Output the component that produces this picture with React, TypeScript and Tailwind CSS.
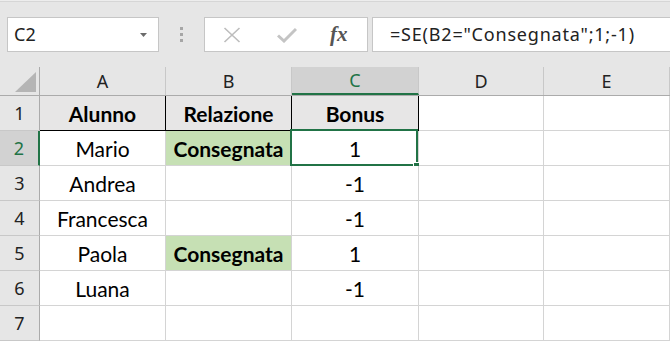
import { Fragment } from 'react';

// Column widths include the 1px right gridline
const columns = [
  { key: 'A', width: 'w-[126px]' },
  { key: 'B', width: 'w-[126px]' },
  { key: 'C', width: 'w-[127px]' },
  { key: 'D', width: 'w-[125px]' },
  { key: 'E', width: 'w-[126px]' },
];

type Row = { n: number; a?: string; b?: string; c?: string };

const rows: Row[] = [
  { n: 1, a: 'Alunno', b: 'Relazione', c: 'Bonus' },
  { n: 2, a: 'Mario', b: 'Consegnata', c: '1' },
  { n: 3, a: 'Andrea', c: '-1' },
  { n: 4, a: 'Francesca', c: '-1' },
  { n: 5, a: 'Paola', b: 'Consegnata', c: '1' },
  { n: 6, a: 'Luana', c: '-1' },
  { n: 7 },
];

const uiFont = "font-['Noto_Sans',sans-serif]";
const cellFont = "font-['Lato',sans-serif]";

const FormulaBar = () => (
  <div className="h-[67px] bg-[#e6e6e6] flex flex-col">
    <div className="h-px bg-[#ededed]" />
    <div className="h-px bg-[#d6d6d6]" />
    <div className="flex items-start pt-[15px]">
      {/* Name box */}
      <div className={`ml-[7px] w-[152px] h-[35px] bg-white border border-[#c6c6c6] flex items-center justify-between pl-[6px] pr-[11px] ${uiFont} text-[18px] text-[#222]`}>
        <span>C2</span>
        <svg width="7" height="4" viewBox="0 0 7 4">
          <path d="M0 0 L7 0 L3.5 4 Z" fill="#6b6b6b" />
        </svg>
      </div>
      {/* Vertical ellipsis */}
      <div className="w-[45px] h-[35px] flex flex-col items-center justify-center gap-[3px]">
        <div className="w-[3px] h-[3px] bg-[#a6a6a6]" />
        <div className="w-[3px] h-[3px] bg-[#a6a6a6]" />
        <div className="w-[3px] h-[3px] bg-[#a6a6a6]" />
      </div>
      {/* Cancel / Enter / Insert function */}
      <div className="w-[164px] h-[35px] bg-white border border-[#c6c6c6] flex items-center">
        <svg className="ml-[18px]" width="18" height="16" viewBox="0 0 18 16">
          <path d="M1.5 1 L16.5 15 M16.5 1 L1.5 15" stroke="#bdbdbd" strokeWidth="1.6" fill="none" />
        </svg>
        <svg className="ml-[36px]" width="20" height="16" viewBox="0 0 20 16">
          <path d="M1 8.5 L7 14 L19 2" stroke="#c4c4c4" strokeWidth="3" fill="none" />
        </svg>
        <span className="ml-[33px] font-['Liberation_Serif',serif] italic font-bold text-[21px] text-[#555] leading-none">
          fx
        </span>
      </div>
      {/* Formula input */}
      <div className={`ml-[4px] flex-1 -mr-[4px] h-[35px] bg-white border border-[#c6c6c6] flex items-center pl-[17px] ${uiFont} text-[18px] tracking-[0.8px] text-[#222]`}>
        =SE(B2="Consegnata";1;-1)
      </div>
    </div>
  </div>
);

const HeaderRow = () => (
  <div className={`flex h-[29px] bg-[#e6e6e6] border-b border-[#ababab] ${uiFont} text-[18px] text-[#222]`}>
    <div className="w-[40px] h-full border-r border-[#ababab] relative">
      <svg className="absolute left-[15px] top-[5px]" width="21" height="20" viewBox="0 0 21 20">
        <path d="M21 0 L21 20 L0 20 Z" fill="#b5b5b5" />
      </svg>
    </div>
    {columns.map((col) => {
      const selected = col.key === 'C';
      return (
        <div
          key={col.key}
          className={`${col.width} h-full border-r border-[#c8c8c8] flex items-center justify-center ${
            selected ? 'bg-[#d2d2d2] text-[#217346] border-b-2 border-b-[#217346]' : ''
          }`}
        >
          {col.key}
        </div>
      );
    })}
  </div>
);

const DataRow = ({ row }: { row: Row }) => {
  const isHead = row.n === 1;
  const selectedRow = row.n === 2;
  const height = isHead ? 'h-[35px]' : 'h-[35px]';
  const values = [row.a, row.b, row.c, undefined, undefined];

  return (
    <div className={`flex ${height}`}>
      <div
        className={`w-[40px] h-full border-b border-[#c8c8c8] flex items-center justify-center ${uiFont} text-[18px] ${
          selectedRow
            ? 'bg-[#d2d2d2] text-[#217346] border-r-2 border-r-[#217346]'
            : 'bg-[#e6e6e6] text-[#222] border-r border-r-[#ababab]'
        }`}
      >
        {row.n}
      </div>
      {columns.map((col, i) => {
        const v = values[i];
        const inTable = i < 3;
        const headCell = isHead && inTable;
        const green = col.key === 'B' && v === 'Consegnata';
        const blackBottom = headCell;
        const blackRight = headCell;
        const isActive = row.n === 2 && col.key === 'C';
        return (
          <div
            key={col.key}
            className={`${col.width} h-full relative flex items-center justify-center pt-[2px] ${cellFont} text-[21px] text-black ${
              headCell ? 'bg-[#e7e6e6] font-bold' : green ? 'bg-[#c6e0b4] font-bold' : 'bg-white'
            } border-r ${blackRight ? 'border-r-black' : 'border-r-[#d4d4d4]'} border-b ${
              blackBottom ? 'border-b-black' : 'border-b-[#d4d4d4]'
            }`}
          >
            {v}
            {isActive && (
              <Fragment>
                <div className="absolute -left-[2px] -top-[2px] right-0 -bottom-px border-2 border-[#217346]" />
                <div className="absolute left-[121px] top-[31px] w-[7px] h-[7px] bg-[#217346] border border-white" />
              </Fragment>
            )}
          </div>
        );
      })}
    </div>
  );
};

export default function App() {
  return (
    <div className="w-[670px] h-[342px] overflow-hidden bg-white">
      <FormulaBar />
      <HeaderRow />
      {rows.map((row) => (
        <DataRow key={row.n} row={row} />
      ))}
    </div>
  );
}
